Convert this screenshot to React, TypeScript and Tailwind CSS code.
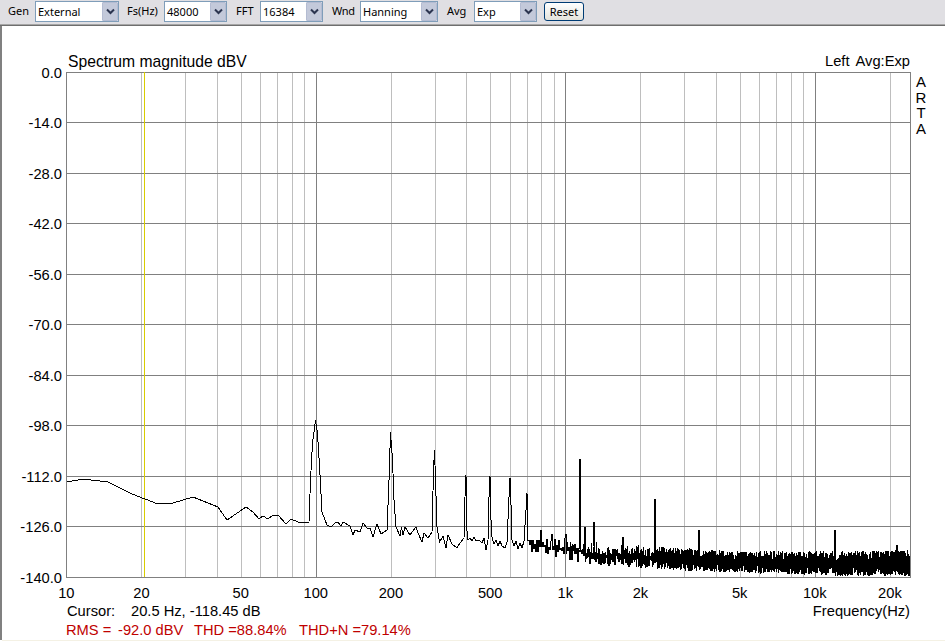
const PLOT = { left: 66, right: 910, top: 72, bottom: 577 };

const xOf = (hz: number) => 66.3 + Math.log10(hz / 10) * 249.5;
const gridX = (hz: number) => Math.round(xOf(hz)) + 0.5;
const gridY = (i: number) => PLOT.top + (i * (PLOT.bottom - PLOT.top)) / 10;

const minorFreqs = [20, 30, 40, 50, 60, 70, 80, 90, 200, 300, 400, 500, 600, 700, 800, 900, 2000, 3000, 4000, 5000, 6000, 7000, 8000, 9000, 20000];
const majorFreqs = [100, 1000, 10000];
const dbLabels = ["0.0", "-14.0", "-28.0", "-42.0", "-56.0", "-70.0", "-84.0", "-98.0", "-112.0", "-126.0", "-140.0"];
const freqLabels: [string, number][] = [
  ["10", 10], ["20", 20], ["50", 50], ["100", 100], ["200", 200], ["500", 500],
  ["1k", 1000], ["2k", 2000], ["5k", 5000], ["10k", 10000], ["20k", 20000],
];

// traced low frequency part, pixel coordinates
const traced: [number, number][] = [
  [67, 482], [83, 479], [108, 482], [132, 494], [158, 504], [173, 503], [193, 497], [218, 507], [227, 520], [246, 507],
  [253, 512], [259, 519], [263, 516], [268, 519], [273, 515], [278, 515], [286, 524], [291, 519], [298, 522], [309, 522],
  [310.5, 480], [312.5, 443], [315.5, 420.5], [317.5, 433], [320, 475], [322, 512], [327, 525], [331, 527], [335, 523], [338, 522],
  [341, 526], [343, 522], [350, 526], [353, 535], [355, 530], [360, 532], [363, 523], [367, 528], [370, 528], [373, 537],
  [377, 524], [381, 534], [387, 530], [389, 480], [390.5, 432.5], [392.5, 460], [394, 500], [396, 527], [400, 536], [401.5, 527],
  [403, 535], [405, 527], [410, 535], [416, 527], [418, 533], [422, 542], [424, 533], [428, 538], [432, 532], [433.5, 470], [434.5, 450],
  [435.5, 480], [437, 527], [439.5, 542], [443, 536], [446, 548], [448, 535], [452, 544], [457, 548], [460, 543], [464, 538],
  [465, 497], [466, 475], [466.5, 527], [468, 540], [470, 538], [472, 541], [474, 537], [476, 541], [479, 540], [482, 543], [484, 538], [486, 550],
  [488, 540], [489, 497], [490, 476], [491, 520], [492, 537], [494, 544], [496, 540], [498, 546], [500, 541], [502, 546], [505, 548], [507, 542],
  [509, 497], [510, 478], [511, 505], [512, 540], [514, 546], [516, 541], [518, 549], [520, 543], [522, 548], [524, 541], [526, 510], [527, 493], [528, 540],
];

// seeded noise, so the picture is the same on every run
let seed = 12345;
const rnd = () => {
  seed = (seed * 1103515245 + 12345) & 0x7fffffff;
  return seed / 0x7fffffff;
};

const spikes: Record<number, number> = {
  541: 530, 552: 534, 566: 534, 580: 459, 585: 527, 594: 522, 623: 537, 655: 499, 699: 530, 835: 530, 897: 545,
};

const lerp = (x: number, pts: [number, number][]) => {
  for (let i = 1; i < pts.length; i++) {
    if (x <= pts[i][0]) {
      const t = (x - pts[i - 1][0]) / (pts[i][0] - pts[i - 1][0]);
      return pts[i - 1][1] + t * (pts[i][1] - pts[i - 1][1]);
    }
  }
  return pts[pts.length - 1][1];
};
const topEdge: [number, number][] = [[528, 536], [567, 538], [600, 543], [640, 545], [700, 549], [740, 551], [840, 551], [910, 550]];
const botEdge: [number, number][] = [[528, 551], [567, 562], [600, 566], [640, 568], [700, 572], [740, 573], [840, 576], [908, 576], [910, 577]];

function buildTrace() {
  const pts: string[] = traced.map(([x, y]) => `${x},${y}`);
  let up = true;
  for (let x = 529; x <= 909; x++) {
    const density = x < 570 ? 1 : x < 620 ? 2 : x < 660 ? 4 : 10;
    if (spikes[x]) pts.push(`${x},${spikes[x]}`);
    for (let i = 0; i < density; i++) {
      const top = lerp(x, topEdge);
      const bot = lerp(x, botEdge);
      const core = (top + bot) / 2;
      const spread = (bot - top) / 2;
      const amount = Math.pow(rnd(), 1.5);
      const y = up ? core - spread * amount : core + spread * amount;
      up = !up;
      pts.push(`${x},${Math.round(y)}`);
    }
  }
  return pts.join(" ");
}
const tracePoints = buildTrace();

function ComboBox({ value, width }: { value: string; width: string }) {
  return (
    <div className={`flex h-[21px] ${width} items-stretch border border-[#7f9db9] bg-white`}>
      <span className="flex-1 pl-[2px] text-[11px] leading-[20px] text-black">{value}</span>
      <span className="flex w-[16px] items-center justify-center rounded-[1px] border border-[#b4bcd2] bg-[#c3c9da]">
        <svg width="9" height="7" viewBox="0 0 9 7">
          <path d="M1 1.5 L4.5 5 L8 1.5" fill="none" stroke="#2c3550" strokeWidth="2" />
        </svg>
      </span>
    </div>
  );
}

function Chart() {
  return (
    <svg width="943" height="614" viewBox="2 26 943 614" className="block" style={{ fontFamily: "'Liberation Sans', Arial, sans-serif" }}>
      <g shapeRendering="crispEdges" strokeWidth="1">
        {minorFreqs.map((f) => (
          <line key={f} x1={gridX(f)} x2={gridX(f)} y1={PLOT.top} y2={PLOT.bottom} stroke="#bebebe" />
        ))}
        {majorFreqs.map((f) => (
          <line key={f} x1={gridX(f)} x2={gridX(f)} y1={PLOT.top} y2={PLOT.bottom} stroke="#808080" />
        ))}
        {dbLabels.map((_, i) => {
          const y = Math.floor(gridY(i)) + 0.5;
          return <line key={i} x1={PLOT.left} x2={PLOT.right + 1} y1={y} y2={y} stroke="#808080" />;
        })}
        <line x1={PLOT.left + 0.5} x2={PLOT.left + 0.5} y1={PLOT.top} y2={PLOT.bottom + 1} stroke="#808080" />
        <line x1={PLOT.right + 0.5} x2={PLOT.right + 0.5} y1={PLOT.top} y2={PLOT.bottom + 1} stroke="#808080" />
        <line x1="144.5" x2="144.5" y1={PLOT.top} y2={PLOT.bottom} stroke="#d8cc00" />
        <polyline points={tracePoints} fill="none" stroke="#000000" strokeWidth="1" />
      </g>

      <g fontSize="14.7" fill="#000000">
        <text x="68" y="66.5" fontSize="15.7">Spectrum magnitude dBV</text>
        <text x="825" y="66">Left</text>
        <text x="910" y="66" textAnchor="end">Avg:Exp</text>
        {dbLabels.map((label, i) => (
          <text key={label} x="62" y={Math.floor(gridY(i)) + 5.5} textAnchor="end">
            {label}
          </text>
        ))}
        {freqLabels.map(([label, f]) => (
          <text key={label} x={xOf(f)} y="598" textAnchor="middle">
            {label}
          </text>
        ))}
        <text x="910" y="616" textAnchor="end">Frequency(Hz)</text>
        <text x="67" y="616">Cursor:</text>
        <text x="131" y="616">20.5 Hz, -118.45 dB</text>
        {["A", "R", "T", "A"].map((c, i) => (
          <text key={i} x="921" y={87 + i * 15.6} fontSize="15" textAnchor="middle">
            {c}
          </text>
        ))}
      </g>
      <g fontSize="14.7" fill="#c00000">
        <text x="66" y="635">RMS =</text>
        <text x="118" y="635">-92.0 dBV</text>
        <text x="194" y="635">THD =88.84%</text>
        <text x="299" y="635">THD+N =79.14%</text>
      </g>
    </svg>
  );
}

export default function App() {
  return (
    <div className="flex h-[641px] w-[945px] flex-col overflow-hidden bg-white">
      {/* Toolbar */}
      <div className="flex h-[24px] shrink-0 items-center bg-[#e0dfe3] pb-[1px] text-[11px] text-black font-['Noto_Sans',sans-serif]">
        <span className="ml-[8px] w-[27px]">Gen</span>
        <ComboBox value="External" width="w-[84px]" />
        <span className="ml-[8px] w-[37px]">Fs(Hz)</span>
        <ComboBox value="48000" width="w-[63px]" />
        <span className="ml-[9px] w-[24px]">FFT</span>
        <ComboBox value="16384" width="w-[63px]" />
        <span className="ml-[9px] w-[28px] tracking-[-0.3px]">Wnd</span>
        <ComboBox value="Hanning" width="w-[78px]" />
        <span className="ml-[9px] w-[27px]">Avg</span>
        <ComboBox value="Exp" width="w-[63px]" />
        <button className="ml-[7px] h-[19px] w-[40px] rounded-[3px] border border-[#003c74] bg-gradient-to-b from-white to-[#e3e3dc] text-[11px] leading-none text-black">
          Reset
        </button>
      </div>
      <div className="h-[1px] shrink-0 bg-[#a6a6a6]" />
      <div className="h-[1px] shrink-0 bg-[#6e6e6e]" />
      <div className="flex flex-1 border-l-2 border-l-[#808080]">
        <Chart />
      </div>
      <div className="ml-[2px] h-[1px] shrink-0 bg-[#f4f1e4]" />
    </div>
  );
}
